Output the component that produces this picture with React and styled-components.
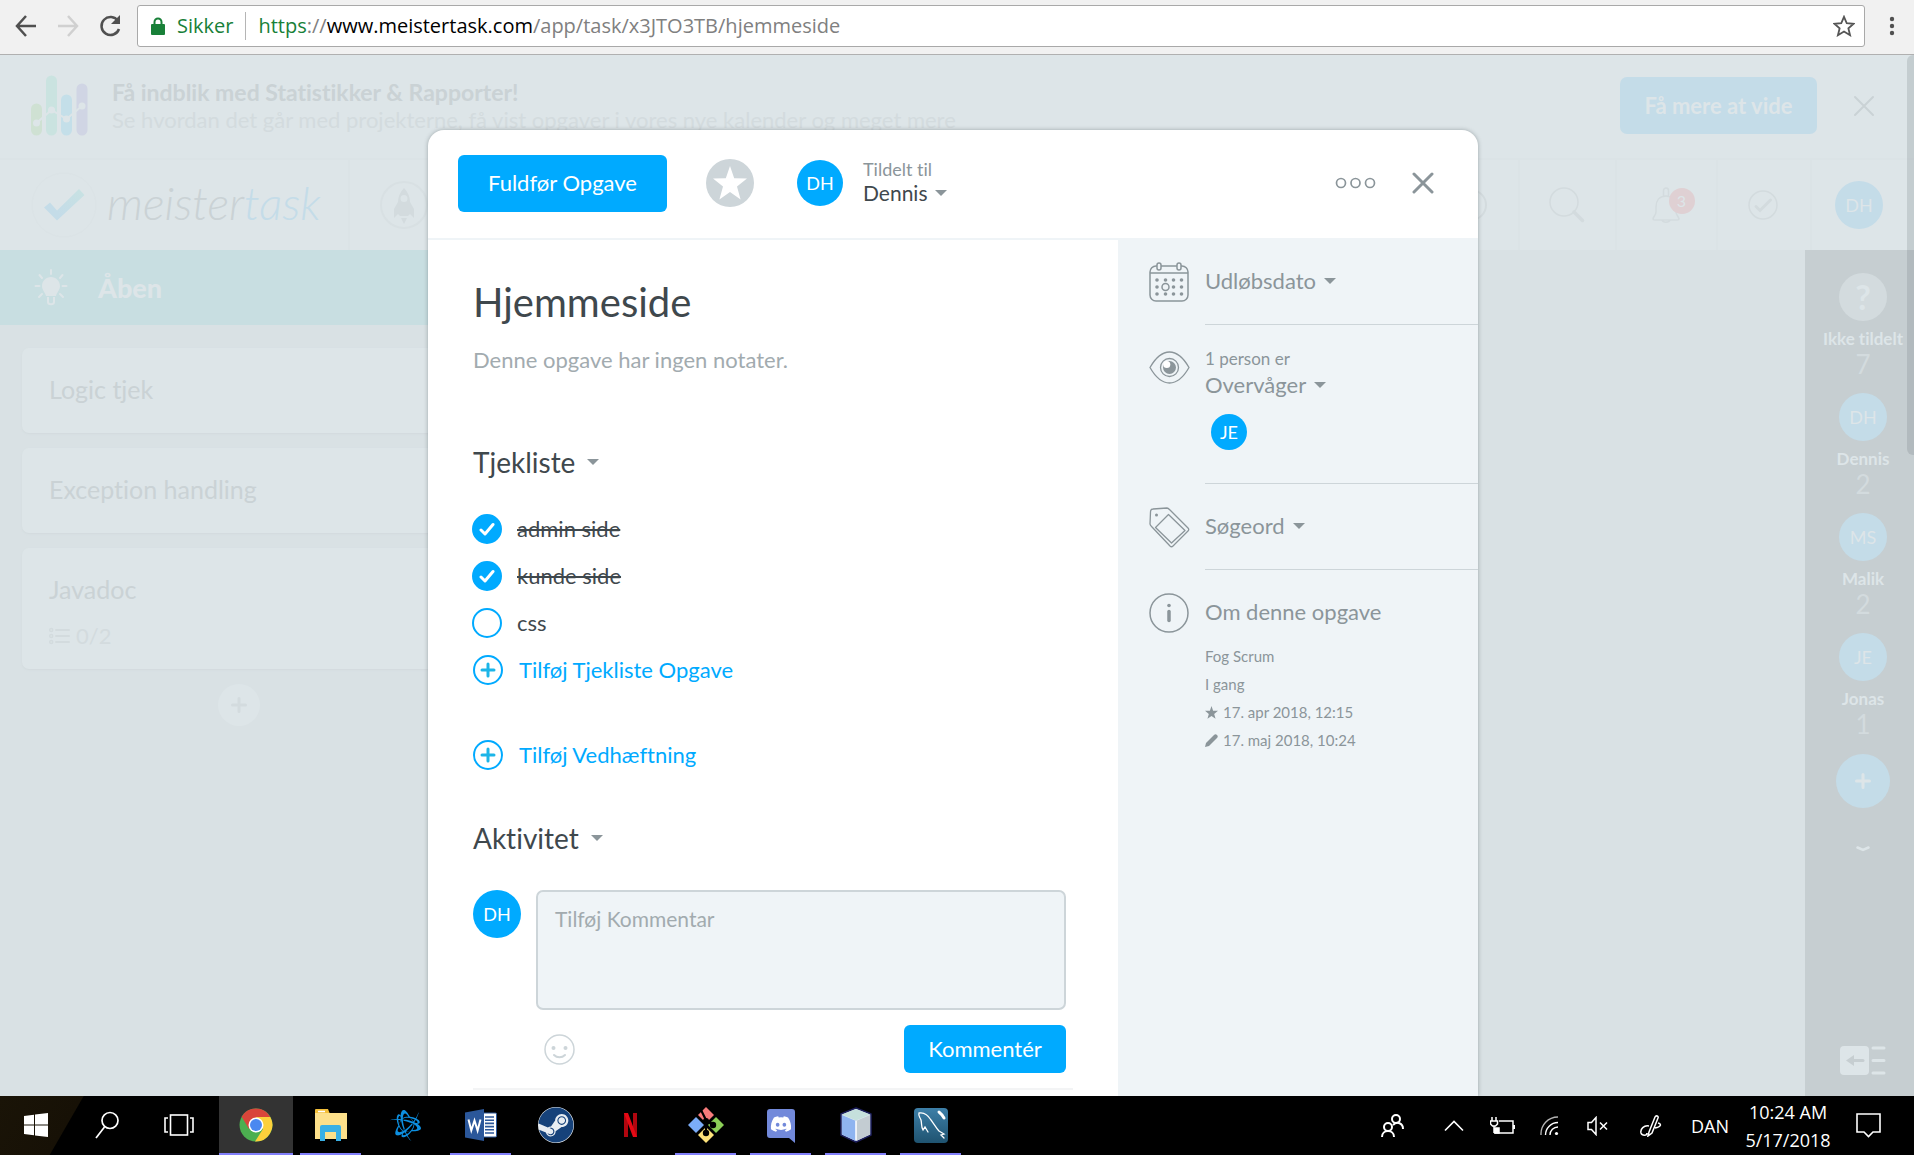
import React from 'react';
import styled, { createGlobalStyle, css } from 'styled-components';
import { FaBattleNet, FaDiscord, FaSteam } from 'react-icons/fa';

const color = {
  blue: '#00aaff',
  ink: '#3f484d',
  grey: '#8b959a',
  soft: '#a2abaf',
  line: '#cdd5d9',
  panel: '#eff4f7',
  veil: '#dde5e8',
  board: '#d9e1e4',
  fadedInk: '#cad2d5',
  faded: '#d3dbde',
  fadedLine: '#dbe3e6',
  fadedBlue: '#c4dce8',
};

const GlobalStyle = createGlobalStyle`
  *, *::before, *::after { box-sizing: border-box; }
  body {
    margin: 0;
    font-family: Lato, "Liberation Sans", sans-serif;
    font-variant-ligatures: none;
    color: ${color.ink};
  }
  button, input, textarea { font: inherit; font-variant-ligatures: none; color: inherit; }
  button { border: 0; padding: 0; background: none; cursor: pointer; }
  h1, h2, p, ul { margin: 0; padding: 0; font-weight: 400; }
  ul { list-style: none; }
  svg { display: block; flex: none; }
`;

const Shell = styled.div`
  display: flex;
  flex-direction: column;
  height: 100vh;
  overflow: hidden;
`;

/* Browser bar */

const BrowserBar = styled.header`
  display: flex;
  align-items: center;
  height: 55px;
  padding: 0 14px 3px 14px;
  background: #f1f1f1;
  border-bottom: 1px solid #b0b0b0;
  font-family: "Open Sans", "Noto Sans", sans-serif;
`;

const NavButtons = styled.div`
  display: flex;
  gap: 18px;
  width: 123px;
`;

const Address = styled.div`
  display: flex;
  flex: 1;
  align-items: center;
  height: 42px;
  padding: 0 9px 0 13px;
  background: #fff;
  border: 1px solid #a9a9a9;
  border-radius: 3px;
  font-size: 20px;
  line-height: 28px;
  color: #808080;
  white-space: nowrap;
`;

const Secure = styled.span`
  margin: 0 12px;
  color: #188038;
`;

const Url = styled.span`
  flex: 1;
  padding-left: 12px;
  border-left: 1px solid #b5b5b5;
  em { font-style: normal; color: #188038; }
  b { font-weight: 400; color: #000; }
`;

/* Application behind the dialog */

const Stage = styled.main`
  position: relative;
  flex: 1;
  min-height: 0;
  overflow: hidden;
`;

const Backdrop = styled.div`
  display: flex;
  flex-direction: column;
  height: 100%;
  background: ${color.board};
`;

const Banner = styled.section`
  display: flex;
  align-items: center;
  height: 105px;
  padding: 0 39px 2px 31px;
  background: ${color.veil};
  border-bottom: 2px solid ${color.fadedLine};
`;

const BannerText = styled.div`
  flex: 1;
  margin-left: 24px;
  font-size: 22px;
  line-height: 28px;
  color: ${color.faded};
  strong { display: block; font-size: 23px; color: ${color.fadedInk}; }
`;

const BannerButton = styled.button`
  height: 57px;
  width: 197px;
  margin-right: 36px;
  border-radius: 7px;
  background: ${color.fadedBlue};
  color: ${color.veil};
  font-size: 22px;
  font-weight: 700;
`;

const AppBar = styled.nav`
  display: flex;
  height: 90px;
  background: ${color.veil};
`;

const Brand = styled.a`
  display: flex;
  align-items: center;
  gap: 10px;
  width: 350px;
  padding-left: 31px;
  border-right: 2px solid ${color.fadedLine};
  color: ${color.fadedInk};
  text-decoration: none;
`;

const BrandName = styled.div`
  padding-bottom: 4px;
  font-size: 46px;
  font-style: italic;
  font-weight: 300;
  line-height: 60px;
  span { color: ${color.fadedBlue}; }
`;

const AppBarSpace = styled.div`
  display: flex;
  flex: 1;
  align-items: center;
  justify-content: space-between;
  padding: 0 30px;
`;

const AppBarCell = styled.div`
  display: flex;
  align-items: center;
  justify-content: center;
  width: ${(p) => p.$width}px;
  padding-right: ${(p) => p.$inset || 0}px;
  border-left: 2px solid ${color.fadedLine};
`;

const BellWrap = styled.button`
  position: relative;
`;

const Badge = styled.span`
  position: absolute;
  top: 1px;
  left: 17px;
  width: 26px;
  height: 26px;
  border-radius: 50%;
  background: #dfd0d3;
  color: ${color.veil};
  font-size: 16px;
  line-height: 26px;
  text-align: center;
`;

const Board = styled.div`
  display: flex;
  flex: 1;
  min-height: 0;
`;

const Column = styled.section`
  width: 478px;
`;

const ColumnHead = styled.header`
  display: flex;
  align-items: center;
  gap: 30px;
  height: 75px;
  padding-left: 34px;
  background: #c8dee1;
  color: ${color.veil};
  h2 { font-size: 27px; font-weight: 900; line-height: 32px; }
`;

const Cards = styled.div`
  display: flex;
  flex-direction: column;
  gap: 15px;
  padding: 23px 22px 15px;
`;

const Card = styled.article`
  min-height: 85px;
  padding: 25px 27px 19px;
  border-radius: 7px;
  background: ${color.veil};
  box-shadow: 0 1px 2px #d2dadd;
  color: ${color.fadedInk};
  font-size: 25px;
  line-height: 32px;
`;

const CardMeta = styled.p`
  display: flex;
  align-items: center;
  gap: 6px;
  margin-top: 17px;
  color: ${color.faded};
  font-size: 22px;
  line-height: 28px;
`;

const AddCard = styled.button`
  display: grid;
  place-items: center;
  width: 42px;
  height: 42px;
  margin: 0 auto;
  border-radius: 50%;
  background: ${color.veil};
`;

const People = styled.aside`
  display: flex;
  flex-direction: column;
  align-items: center;
  width: 109px;
  margin-left: auto;
  padding: 23px 0 21px 7px;
  background: #c6ced1;
`;

const Person = styled.div`
  display: flex;
  flex-direction: column;
  align-items: center;
  height: 120px;
  color: ${color.veil};
`;

const PersonName = styled.strong`
  margin-top: 4px;
  font-size: 17px;
  line-height: 28px;
  white-space: nowrap;
`;

const PersonCount = styled.span`
  color: ${color.faded};
  font-size: 26px;
  line-height: 22px;
`;

const AddPerson = styled.button`
  display: grid;
  place-items: center;
  width: 54px;
  height: 54px;
  margin: 1px 0 38px;
  border-radius: 50%;
  background: ${color.fadedBlue};
`;

const CollapsePeople = styled.button`
  margin-top: auto;
`;

const ScrollThumb = styled.div`
  position: absolute;
  top: 0;
  right: 0;
  width: 7px;
  height: 400px;
  border-radius: 6px 0 0 6px;
  background: rgba(100, 110, 115, 0.2);
`;

/* Shared pieces */

const Avatar = styled.span`
  display: grid;
  flex: none;
  place-items: center;
  width: ${(p) => p.$size}px;
  height: ${(p) => p.$size}px;
  border-radius: 50%;
  background: ${(p) => p.$bg || color.blue};
  color: ${(p) => p.$fg || '#fff'};
  font-size: ${(p) => p.$text || 18}px;
  line-height: 24px;
`;

const PrimaryButton = styled.button`
  width: ${(p) => p.$width}px;
  height: ${(p) => p.$height}px;
  border-radius: 6px;
  background: ${color.blue};
  color: #fff;
  font-size: 22px;
  line-height: 28px;
`;

const Caret = styled.span`
  flex: none;
  border: 6px solid transparent;
  border-top-color: ${color.grey};
  border-bottom: 0;
`;

const Drop = styled.button`
  display: flex;
  align-items: center;
  gap: 8px;
  color: ${(p) => (p.$dark ? color.ink : color.grey)};
  font-size: ${(p) => (p.$dark ? 21 : 22)}px;
  line-height: 28px;
`;

/* Task dialog */

const DialogLayer = styled.div`
  position: absolute;
  inset: 75px 8px 0 0;
  display: flex;
  justify-content: center;
`;

const Dialog = styled.section`
  display: flex;
  flex-direction: column;
  width: 1050px;
  border-radius: 16px 16px 0 0;
  background: #fff;
  box-shadow: 0 0 4px rgba(60, 70, 75, 0.4);
  overflow: hidden;
`;

const DialogHead = styled.header`
  display: flex;
  align-items: center;
  height: 110px;
  padding: 0 44px 2px 30px;
  border-bottom: 2px solid ${color.panel};
`;

const StarButton = styled.button`
  display: grid;
  place-items: center;
  width: 48px;
  height: 48px;
  margin: 0 43px 0 39px;
  border-radius: 50%;
  background: ${color.line};
`;

const Assignee = styled.div`
  flex: 1;
  margin-left: 20px;
  color: ${color.grey};
  font-size: 18px;
  line-height: 20px;
`;

const HeadActions = styled.div`
  display: flex;
  align-items: center;
  gap: 36px;
`;

const DialogBody = styled.div`
  display: flex;
  flex: 1;
  min-height: 0;
`;

const Main = styled.div`
  flex: 1;
  padding: 38px 45px 0;
`;

const Title = styled.h1`
  font-size: 40px;
  line-height: 48px;
`;

const Notes = styled.p`
  margin-top: 20px;
  color: ${color.soft};
  font-size: 22px;
  line-height: 28px;
`;

const SectionTitle = styled.h2`
  display: flex;
  align-items: center;
  gap: 12px;
  margin-bottom: 35px;
  font-size: 28px;
  line-height: 34px;
`;

const Checklist = styled.ul`
  display: flex;
  flex-direction: column;
  gap: 17px;
  margin: 0 0 17px -1px;
`;

const CheckRow = styled.label`
  display: grid;
  grid-template-columns: 30px 1fr;
  column-gap: 15px;
  align-items: center;
  font-size: 22px;
  line-height: 28px;
  svg { grid-area: 1 / 1; justify-self: center; pointer-events: none; }
  span { grid-area: 1 / 2; justify-self: start; }
  ${(p) => p.$done && css`span { text-decoration: line-through 2px; }`}
`;

const CheckInput = styled.input`
  grid-area: 1 / 1;
  appearance: none;
  width: 30px;
  height: 30px;
  margin: 0;
  border: 2px solid ${color.blue};
  border-radius: 50%;
  &:checked { background: ${color.blue}; }
`;

const AddLink = styled.button`
  display: flex;
  align-items: center;
  gap: 16px;
  color: ${color.blue};
  font-size: 22px;
  line-height: 28px;
`;

const Block = styled.section`
  margin-top: ${(p) => p.$top}px;
`;

const Composer = styled.form`
  display: grid;
  grid-template-columns: 48px 1fr;
  column-gap: 15px;
  row-gap: 15px;
  padding: 0 7px 15px 0;
  border-bottom: 2px solid #f3f4f5;
`;

const CommentBox = styled.textarea`
  display: block;
  width: 100%;
  height: 120px;
  padding: 13px 17px;
  border: 2px solid ${color.line};
  border-radius: 7px;
  background: ${color.panel};
  font-size: 21px;
  line-height: 28px;
  resize: none;
  &::placeholder { color: ${color.soft}; opacity: 1; }
`;

const ComposerFoot = styled.div`
  display: flex;
  grid-column: 2;
  align-items: center;
  justify-content: space-between;
  padding-left: 8px;
`;

const Side = styled.aside`
  width: 360px;
  margin-top: -2px;
  padding-left: 31px;
  background: ${color.panel};
`;

const SideItem = styled.section`
  display: flex;
  gap: 15px;
  align-items: flex-start;
`;

const SideIcon = styled.div`
  width: 41px;
  padding-top: ${(p) => p.$top}px;
`;

const SideBody = styled.div`
  flex: 1;
  padding: ${(p) => p.$pad};
  border-bottom: ${(p) => (p.$last ? '0' : '1px')} solid ${color.line};
  color: ${color.grey};
  font-size: 22px;
  line-height: 28px;
`;

const SideSmall = styled.p`
  font-size: 17px;
  line-height: 24px;
`;

const Watchers = styled.div`
  padding: 15px 0 0 6px;
`;

const Facts = styled.ul`
  margin-top: 16px;
  font-size: 15px;
  line-height: 28px;
  li { display: flex; align-items: center; gap: 5px; }
`;

/* Taskbar */

const Taskbar = styled.footer`
  display: flex;
  height: 59px;
  background: linear-gradient(120deg, #1a1407 0, #171106 72px, #000 73px);
  color: #fff;
  font-family: "Open Sans", "Noto Sans", sans-serif;
`;

const TaskButton = styled.button`
  display: grid;
  place-items: center;
  width: ${(p) => p.$width || 75}px;
  padding-bottom: 1px;
  background: ${(p) => (p.$active ? '#333' : 'none')};
  ${(p) => p.$open && css`
    background: linear-gradient(#8280fa, #8280fa) bottom / ${p.$active ? '100%' : '61px'} 2px no-repeat ${p.$active ? '#333' : 'transparent'};
  `}
`;

const SystemButtons = styled.div`
  display: flex;
  width: 219px;
`;

const Tray = styled.div`
  display: flex;
  align-items: center;
  gap: 27px;
  margin-left: auto;
  padding-right: 33px;
  font-size: 18px;
`;

const TrayIcons = styled.div`
  display: grid;
  grid-template-columns: 38px 71px 50px 47px 53px 24px;
  align-items: center;
`;

const Clock = styled.time`
  width: 92px;
  line-height: 28px;
  text-align: center;
  margin: 0 -5px 0 -14px;
`;

const Cross = ({ size, stroke, width = 3 }) => (
  <svg width={size} height={size} viewBox="0 0 22 22" stroke={stroke} strokeWidth={width} strokeLinecap="round">
    <path d="M2 2 20 20M20 2 2 20" />
  </svg>
);

const Plus = ({ size, stroke, width }) => (
  <svg width={size} height={size} viewBox="0 0 16 16" stroke={stroke} strokeWidth={width} strokeLinecap="round">
    <path d="M8 1.5v13M1.5 8h13" />
  </svg>
);

const AddCircle = () => (
  <svg width="30" height="30" viewBox="0 0 30 30" fill="none" strokeLinecap="round">
    <circle cx="15" cy="15" r="14" stroke={color.blue} strokeWidth="2" />
    <path d="M15 9v12M9 15h12" stroke="#1cb5e8" strokeWidth="3" />
  </svg>
);

const Star = ({ size, fill }) => (
  <svg width={size} height={size} viewBox="0 0 34 34" fill={fill}>
    <path d="M17 0 21.2 12.2 34 12.6 24 20.6 27.6 33.4 17 26 6.4 33.4 10 20.6 0 12.6 12.8 12.2Z" />
  </svg>
);

const StatsIcon = () => (
  <svg width="57" height="61" viewBox="0 0 57 61" strokeLinecap="round" fill="none" strokeWidth="11">
    <path d="M5.5 34v21" stroke="#cfe1d3" />
    <path d="M20.500 6v49" stroke="#cae3e0" />
    <path d="M35.500 25v30" stroke="#c4dfe9" />
    <path d="M51 14v41" stroke="#d0d5e4" />
    <path d="M5.500 48 20.500 35 35.500 44 51 31" stroke={color.veil} strokeWidth="2" />
    <g fill={color.veil}>
      <circle cx="5.500" cy="48" r="3.500" /><circle cx="20.500" cy="35" r="3.500" />
      <circle cx="35.500" cy="44" r="3.500" /><circle cx="51" cy="31" r="3.500" />
    </g>
  </svg>
);

const BrandMark = () => (
  <svg width="66" height="66" viewBox="0 0 66 66" fill="none">
    <defs>
      <linearGradient id="tick" x1="0" y1="1" x2="1" y2="0">
        <stop offset=".3" stopColor="#c4dce8" /><stop offset="1" stopColor="#c8e2e2" />
      </linearGradient>
    </defs>
    <circle cx="33" cy="33" r="32" stroke={color.fadedLine} />
    <path d="M13 35.500 19 30.500 26 38.500 48 17 53.500 23 26 48.500Z" fill="url(#tick)" />
  </svg>
);

const Rocket = () => (
  <svg width="48" height="48" viewBox="0 0 48 48">
    <circle cx="24" cy="24" r="23" fill="none" stroke="#d8e0e3" strokeWidth="2" />
    <path fill={color.faded} fillRule="evenodd" d="M24 7c4 4 6 9 6 14l4 7v9l-4-4-2 2h-8l-2-2-4 4v-9l4-7c0-5 2-10 6-14Zm0 7a3.500 3.500 0 1 0 0 7 3.500 3.500 0 0 0 0-7ZM21 37h6l-3 6Z" />
  </svg>
);

const Ring = () => (
  <svg width="34" height="34" viewBox="0 0 34 34" fill="none" stroke={color.faded} strokeWidth="2">
    <circle cx="17" cy="17" r="15" /><path d="M17 9v8l5 4" />
  </svg>
);

const SearchIcon = () => (
  <svg width="36" height="36" viewBox="0 0 36 36" fill="none" stroke={color.faded} strokeLinecap="round">
    <circle cx="15" cy="15" r="14" strokeWidth="1.500" />
    <path d="M25 25 33.500 33.500" strokeWidth="3.500" />
  </svg>
);

const Bell = () => (
  <svg width="28" height="36" viewBox="0 0 28 36" fill="none" stroke={color.faded} strokeWidth="1.500">
    <path d="M11.500 9V3.500a2.500 2.500 0 0 1 5 0V9M14 9c-7 0-10 5-10 11v5c0 3-3 5-3 7 0 1 1 1 2 1h22c1 0 2 0 2-1 0-2-3-4-3-7v-5c0-6-3-11-10-11ZM10 33c1 3 7 3 8 0" />
  </svg>
);

const CheckRing = () => (
  <svg width="30" height="30" viewBox="0 0 30 30" fill="none" stroke={color.faded}>
    <circle cx="15" cy="15" r="14" strokeWidth="1.500" />
    <path d="M8 16.500 12 20.500 22.500 10" strokeWidth="3" strokeLinecap="round" />
  </svg>
);

const Bulb = () => (
  <svg width="34" height="38" viewBox="0 0 34 38" fill={color.veil} stroke={color.veil}>
    <path d="M17 8c5 0 9 4 9 9 0 4-3 6-4 10H12c-1-4-4-6-4-10 0-5 4-9 9-9Z" stroke="none" />
    <path d="M14 28v5c0 3 6 3 6 0v-5" fill="none" strokeWidth="2" />
    <path d="M17 1v4M5.500 6 8 9M28.500 6 26 9M1.500 17h4M28.500 17h4M5 28l3-3M29 28l-3-3" strokeWidth="2" strokeLinecap="round" />
  </svg>
);

const ListIcon = () => (
  <svg width="21" height="18" viewBox="0 0 21 18" fill="none" stroke={color.faded} strokeLinecap="round">
    <g strokeWidth="1.500"><circle cx="2.200" cy="3" r="1.500" /><circle cx="2.200" cy="9" r="1.500" /><circle cx="2.200" cy="15" r="1.500" /></g>
    <path d="M7 3h13M7 9h13M7 15h13" strokeWidth="2" />
  </svg>
);

const Calendar = () => (
  <svg width="41" height="40" viewBox="0 0 41 40" fill="none" stroke={color.grey} strokeWidth="1.500">
    <path d="M8 4H7a6 6 0 0 0-6 6v23a6 6 0 0 0 6 6h26a6 6 0 0 0 6-6V10a6 6 0 0 0-6-6h-1M12 4h16M1 11h38" />
    <rect x="8" y="1" width="4" height="7" rx="2" /><rect x="28" y="1" width="4" height="7" rx="2" />
    <circle cx="16.500" cy="25" r="3.500" />
    <g fill={color.grey} stroke="none">
      {[8, 16.5, 24.5, 32.5].map((x) => [18, 25, 32].map((y) => (x === 16.5 && y === 25 ? null : <circle key={`${x}-${y}`} cx={x} cy={y} r="1.800" />)))}
    </g>
  </svg>
);

const Eye = () => (
  <svg width="41" height="33" viewBox="0 0 41 33" fill="none" stroke={color.grey} strokeWidth="1.300">
    <path d="M1 16.500C7 6 13 1 20.500 1S34 6 40 16.500C34 27 28 32 20.500 32S7 27 1 16.500Z" />
    <circle cx="20.500" cy="16.500" r="9" />
    <circle cx="20.500" cy="16.500" r="6.500" fill={color.grey} stroke="none" />
    <circle cx="17.800" cy="13.500" r="3.500" fill="#fff" stroke="none" />
  </svg>
);

const Tag = () => (
  <svg width="41" height="41" viewBox="0 0 41 41" fill="none" stroke={color.grey} strokeWidth="1.300" strokeLinejoin="round">
    <path d="M4 2 18 1c1 0 2 1 3 2l18 18c1 1 1 2 0 3L24 39c-1 1-2 1-3 0L3 20c-1-1-2-2-2-3l.500-12c0-2 1-3 2.500-3Z" />
    <path d="M19.500 7.500 36 23.500 22.500 36 6.500 20.500Z" />
    <circle cx="7.500" cy="8" r="1.500" fill={color.grey} stroke="none" />
  </svg>
);

const Info = () => (
  <svg width="41" height="40" viewBox="0 0 41 40" fill="none" stroke={color.grey}>
    <circle cx="20" cy="20" r="19" strokeWidth="1.500" />
    <path d="M20 18.500v9" strokeWidth="3.500" strokeLinecap="round" />
    <circle cx="20" cy="12.500" r="1.800" fill={color.grey} stroke="none" />
  </svg>
);

const Pencil = () => (
  <svg width="13" height="13" viewBox="0 0 13 13" fill={color.grey}>
    <path d="M0 13 1 9 9 1c1-1 2-1 3 0s1 2 0 3L4 12Z" />
  </svg>
);

const Smiley = () => (
  <svg width="31" height="31" viewBox="0 0 31 31" fill="none" stroke={color.line} strokeWidth="1.500">
    <circle cx="15.500" cy="15.500" r="14.500" />
    <path d="M10 21c3 3 8 3 11 0" strokeWidth="2" strokeLinecap="round" />
    <g fill={color.line} stroke="none"><circle cx="9.500" cy="14" r="2" /><circle cx="21.500" cy="14" r="2" /></g>
  </svg>
);

const ChromeLogo = () => (
  <svg width="34" height="34" viewBox="0 0 34 34">
    <circle cx="17" cy="17" r="16.500" fill="#4caf50" />
    <path d="M17 17 2.700 8.700A16.500 16.500 0 0 1 31.300 9H17Z" fill="#d9453a" />
    <path d="M17 9h14.300A16.500 16.500 0 0 1 16 33.500L24 21Z" fill="#fcd03b" />
    <path d="M2.700 8.700 10 21l7-12-7-3Z" fill="#d9453a" />
    <circle cx="17" cy="17" r="7.500" fill="#fff" /><circle cx="17" cy="17" r="6" fill="#4a88f0" />
  </svg>
);

const Folder = () => (
  <svg width="32" height="32" viewBox="0 0 32 32">
    <path d="M0 1a1 1 0 0 1 1-1h12l2 5H0Z" fill="#f3bf3a" /><path d="M0 4h32v26H0Z" fill="#fde08a" />
    <path d="M3 2.500h7" stroke="#fff" strokeWidth="1.500" />
    <path d="M5 32V18a2 2 0 0 1 2-2h17a2 2 0 0 1 2 2v14h-5v-9H10v9Z" fill="#39b0e5" />
  </svg>
);

const WordLogo = () => (
  <svg width="32" height="32" viewBox="0 0 32 32">
    <rect x="15" y="4" width="16.500" height="24" rx="1" fill="#fff" stroke="#2b579a" />
    <path d="M20 8h9M20 11.200h9M20 14.400h9M20 17.600h9M20 20.800h9M20 24h9" stroke="#2b579a" strokeWidth="1.600" />
    <path d="M0 3.500 19 0v32L0 28.500Z" fill="#2b579a" />
    <path d="M3.500 10.500 6.300 21.500 9.500 11.500 12.600 21.500 15.500 10.500" fill="none" stroke="#fff" strokeWidth="2" />
  </svg>
);

const GitLogo = () => (
  <svg width="36" height="36" viewBox="0 0 36 36">
    <path d="M18 0 26 8 18 16 10 8Z" fill="#f77b7b" /><path d="M28 10 36 18 28 26 20 18Z" fill="#8ccf57" />
    <path d="M18 20 26 28 18 36 10 28Z" fill="#fde27a" /><path d="M8 10 16 18 8 26 0 18Z" fill="#7bacf8" />
    <path d="M13 3 18 13v13M18 13l7 5" fill="none" stroke="#000" strokeWidth="2.200" />
    <circle cx="18" cy="14" r="3" /><circle cx="18" cy="26" r="3.200" /><circle cx="25" cy="18" r="3.200" />
  </svg>
);

const DiscordLogo = () => (
  <svg width="28" height="36" viewBox="0 0 28 36">
    <path d="M3 2h22a3 3 0 0 1 3 3v31l-6-5H3a3 3 0 0 1-3-3V5a3 3 0 0 1 3-3Z" fill="#7289da" />
    <FaDiscord x="3" y="6" size={22} color="#fff" />
  </svg>
);

const SteamTile = styled.span`
  display: block;
  width: 36px;
  height: 36px;
  border-radius: 50%;
  background: #e8edf2;
  svg { width: 36px; height: 36px; }
`;

const NetBeans = () => (
  <svg width="34" height="36" viewBox="0 0 34 36" stroke="#1d1f5c" strokeWidth="1.500" strokeLinejoin="round">
    <path d="M17 1 32 7v21L17 35 2 28V7Z" fill="#dfe9f2" />
    <path d="M3 8 17 14v20L3 27.500Z" fill="#8fb4f0" stroke="none" />
    <path d="M31 8 17 14v20l14-6.500Z" fill="#c3ccd2" stroke="none" />
    <path d="M17 2 31 7.500 17 13.500 3 7.500Z" fill="#c5e0dc" stroke="none" />
    <path d="M17 14v19" stroke="#fff" />
  </svg>
);

const Workbench = () => (
  <svg width="34" height="35" viewBox="0 0 34 35" fill="none" stroke="#fff" strokeWidth="1.300" strokeLinecap="round">
    <defs><linearGradient id="wb" x1="0" y1="0" x2="0" y2="1"><stop stopColor="#3d7fa8" /><stop offset="1" stopColor="#1f5370" /></linearGradient></defs>
    <rect width="34" height="35" rx="4" fill="url(#wb)" stroke="none" />
    <path d="M5 5c5-1 9 2 12 7 3 4 5 8 8 11l5 3-3 1 3 3M5 5c-1 3 1 4 2 7 1 4 0 7 2 10l2-3 3 5" />
    <path d="M25 4l3 3 2 3" strokeWidth="3" />
  </svg>
);

const BACKLOG = [{ title: 'Logic tjek' }, { title: 'Exception handling' }, { title: 'Javadoc', progress: '0/2' }];
const PEOPLE = [
  { initials: '?', name: 'Ikke tildelt', count: 7 },
  { initials: 'DH', name: 'Dennis', count: 2 },
  { initials: 'MS', name: 'Malik', count: 2 },
  { initials: 'JE', name: 'Jonas', count: 1 },
];
const TODOS = [{ text: 'admin side', done: true }, { text: 'kunde side', done: true }, { text: 'css', done: false }];

function Browser() {
  return (
    <BrowserBar>
      <NavButtons>
        <button aria-label="Tilbage">
          <svg width="24" height="24" viewBox="0 0 24 24" fill="none" stroke="#505050" strokeWidth="2.500"><path d="M22 12H3M12 2 3 12l9 10" /></svg>
        </button>
        <button aria-label="Frem">
          <svg width="24" height="24" viewBox="0 0 24 24" fill="none" stroke="#d0d0d0" strokeWidth="2.500"><path d="M2 12h19M12 2l9 10-9 10" /></svg>
        </button>
        <button aria-label="Genindlæs">
          <svg width="24" height="24" viewBox="0 0 24 24" fill="none" stroke="#505050" strokeWidth="2.500"><path d="M20 7a9 9 0 1 0 1 8" /><path d="M22 1v9h-9Z" fill="#505050" stroke="none" /></svg>
        </button>
      </NavButtons>
      <Address>
        <svg width="14" height="18" viewBox="0 0 14 18"><rect x="0" y="7" width="14" height="11" rx="1" fill="#188038" /><path d="M3.500 8V5a3.500 3.500 0 0 1 7 0v3" fill="none" stroke="#188038" strokeWidth="2" /></svg>
        <Secure>Sikker</Secure>
        <Url><em>https</em>://<b>www.meistertask.com</b>/app/task/x3JTO3TB/hjemmeside</Url>
        <button aria-label="Bogmærk">
          <svg width="22" height="22" viewBox="0 0 24 24" fill="none" stroke="#555" strokeWidth="2"><path d="m12 2 3 7 7.500.600-5.700 5 1.800 7.400L12 18l-6.600 4 1.800-7.400-5.700-5L9 9Z" /></svg>
        </button>
      </Address>
      <svg width="35" height="20" viewBox="0 0 35 20" fill="#505050"><circle cx="27" cy="3" r="2.200" /><circle cx="27" cy="10" r="2.200" /><circle cx="27" cy="17" r="2.200" /></svg>
    </BrowserBar>
  );
}

function BoardPage() {
  return (
    <Backdrop>
      <Banner>
        <StatsIcon />
        <BannerText>
          <strong>Få indblik med Statistikker &amp; Rapporter!</strong>
          Se hvordan det går med projekterne, få vist opgaver i vores nye kalender og meget mere
        </BannerText>
        <BannerButton>Få mere at vide</BannerButton>
        <button aria-label="Luk banner"><Cross size={22} stroke={color.fadedInk} width={2} /></button>
      </Banner>
      <AppBar>
        <Brand href="#"><BrandMark /><BrandName>meister<span>task</span></BrandName></Brand>
        <AppBarSpace><Rocket /><Ring /></AppBarSpace>
        <AppBarCell $width={97} $inset={2}><button aria-label="Søg"><SearchIcon /></button></AppBarCell>
        <AppBarCell $width={101} $inset={2}><BellWrap aria-label="Notifikationer"><Bell /><Badge>3</Badge></BellWrap></AppBarCell>
        <AppBarCell $width={94} $inset={2}><button aria-label="Mine opgaver"><CheckRing /></button></AppBarCell>
        <AppBarCell $width={104} $inset={8}><Avatar $size={48} $bg={color.fadedBlue} $fg={color.veil}>DH</Avatar></AppBarCell>
      </AppBar>
      <Board>
        <Column>
          <ColumnHead><Bulb /><h2>Åben</h2></ColumnHead>
          <Cards>
            {BACKLOG.map((card) => (
              <Card key={card.title}>
                {card.title}
                {card.progress && <CardMeta><ListIcon />{card.progress}</CardMeta>}
              </Card>
            ))}
          </Cards>
          <AddCard aria-label="Tilføj opgave"><Plus size={16} stroke={color.faded} width={3} /></AddCard>
        </Column>
        <People>
          {PEOPLE.map((p) => (
            <Person key={p.name}>
              <Avatar $size={48} $bg={p.initials === '?' ? color.faded : color.fadedBlue} $fg={color.veil} $text={p.initials === '?' ? 34 : 18}>
                {p.initials === '?' ? <strong>?</strong> : p.initials}
              </Avatar>
              <PersonName>{p.name}</PersonName>
              <PersonCount>{p.count}</PersonCount>
            </Person>
          ))}
          <AddPerson aria-label="Tilføj medlem"><Plus size={16} stroke={color.veil} width={3} /></AddPerson>
          <button aria-label="Vis flere">
            <svg width="14" height="6" viewBox="0 0 14 6" fill="none" stroke={color.veil} strokeWidth="2.500" strokeLinecap="round"><path d="M1.500 1.500 7 4l5.500-2.500" /></svg>
          </button>
          <CollapsePeople aria-label="Skjul panel">
            <svg width="46" height="29" viewBox="0 0 46 29" strokeLinecap="round">
              <rect width="29" height="29" rx="4" fill={color.veil} />
              <path d="M33 2h11M33 14.500h11M33 27h11" stroke={color.veil} strokeWidth="3" />
              <path d="M11 14.500h12" stroke="#c6ced1" strokeWidth="3" /><path d="M6 14.500 14 9v11Z" fill="#c6ced1" />
            </svg>
          </CollapsePeople>
        </People>
      </Board>
      <ScrollThumb />
    </Backdrop>
  );
}

function TaskDialog() {
  return (
    <DialogLayer>
      <Dialog role="dialog" aria-label="Hjemmeside">
        <DialogHead>
          <PrimaryButton $width={209} $height={57}>Fuldfør Opgave</PrimaryButton>
          <StarButton aria-label="Favorit"><Star size={34} fill="#fff" /></StarButton>
          <Avatar $size={46}>DH</Avatar>
          <Assignee>Tildelt til<Drop $dark>Dennis<Caret /></Drop></Assignee>
          <HeadActions>
            <button aria-label="Mere">
              <svg width="41" height="12" viewBox="0 0 41 12" fill="none" stroke={color.grey} strokeWidth="1.700"><circle cx="6" cy="6" r="4.500" /><circle cx="20.500" cy="6" r="4.500" /><circle cx="35" cy="6" r="4.500" /></svg>
            </button>
            <button aria-label="Luk"><Cross size={22} stroke={color.grey} /></button>
          </HeadActions>
        </DialogHead>
        <DialogBody>
          <Main>
            <Title>Hjemmeside</Title>
            <Notes>Denne opgave har ingen notater.</Notes>
            <Block $top={71}>
              <SectionTitle>Tjekliste<Caret /></SectionTitle>
              <Checklist>
                {TODOS.map((todo) => (
                  <li key={todo.text}>
                    <CheckRow $done={todo.done}>
                      <CheckInput type="checkbox" defaultChecked={todo.done} />
                      {todo.done && (
                        <svg width="16" height="14" viewBox="0 0 16 14" fill="none" stroke="#fff" strokeWidth="3" strokeLinecap="round" strokeLinejoin="round"><path d="M2 8l4 4 8-9.500" /></svg>
                      )}
                      <span>{todo.text}</span>
                    </CheckRow>
                  </li>
                ))}
              </Checklist>
              <AddLink><AddCircle />Tilføj Tjekliste Opgave</AddLink>
            </Block>
            <Block $top={55}>
              <AddLink><AddCircle />Tilføj Vedhæftning</AddLink>
            </Block>
            <Block $top={51}>
              <SectionTitle>Aktivitet<Caret /></SectionTitle>
              <Composer>
                <Avatar $size={48}>DH</Avatar>
                <CommentBox aria-label="Kommentar" placeholder="Tilføj Kommentar" />
                <ComposerFoot>
                  <button type="button" aria-label="Emoji"><Smiley /></button>
                  <PrimaryButton type="button" $width={162} $height={48}>Kommentér</PrimaryButton>
                </ComposerFoot>
              </Composer>
            </Block>
          </Main>
          <Side>
            <SideItem>
              <SideIcon $top={24}><Calendar /></SideIcon>
              <SideBody $pad="29px 0"><Drop>Udløbsdato<Caret /></Drop></SideBody>
            </SideItem>
            <SideItem>
              <SideIcon $top={26}><Eye /></SideIcon>
              <SideBody $pad="22px 0 33px">
                <SideSmall>1 person er</SideSmall>
                <Drop>Overvåger<Caret /></Drop>
                <Watchers><Avatar $size={36}>JE</Avatar></Watchers>
              </SideBody>
            </SideItem>
            <SideItem>
              <SideIcon $top={23}><Tag /></SideIcon>
              <SideBody $pad="28px 0 29px"><Drop>Søgeord<Caret /></Drop></SideBody>
            </SideItem>
            <SideItem>
              <SideIcon $top={23}><Info /></SideIcon>
              <SideBody $pad="28px 0" $last>
                Om denne opgave
                <Facts>
                  <li>Fog Scrum</li>
                  <li>I gang</li>
                  <li><Star size={13} fill={color.grey} />17. apr 2018, 12:15</li>
                  <li><Pencil />17. maj 2018, 10:24</li>
                </Facts>
              </SideBody>
            </SideItem>
          </Side>
        </DialogBody>
      </Dialog>
    </DialogLayer>
  );
}

function WindowsBar() {
  return (
    <Taskbar>
      <SystemButtons>
        <TaskButton $width={71} aria-label="Start">
          <svg width="24" height="24" viewBox="0 0 24 24" fill="#fff"><path d="M0 3 10 1.700V11.500H0ZM11 1.500 24 0v11.500H11ZM0 12.500h10v9.800L0 21ZM11 12.500h13V24l-13-1.600Z" /></svg>
        </TaskButton>
        <TaskButton $width={72} aria-label="Søg">
          <svg width="24" height="30" viewBox="0 0 24 30" fill="none" stroke="#fff" strokeWidth="1.700"><circle cx="15" cy="10.500" r="8" /><path d="M9.500 17 1 28" /></svg>
        </TaskButton>
        <TaskButton $width={72} aria-label="Opgavevisning">
          <svg width="30" height="22" viewBox="0 0 30 22" fill="none" stroke="#fff" strokeWidth="1.600"><rect x="6.500" y="1" width="17" height="20" /><path d="M4 4H1v14h3M26 4h3v14h-3" /></svg>
        </TaskButton>
      </SystemButtons>
      <TaskButton $width={74} $open $active aria-label="Chrome"><ChromeLogo /></TaskButton>
      <TaskButton $open aria-label="Stifinder"><Folder /></TaskButton>
      <TaskButton aria-label="Battle.net"><FaBattleNet size={31} color="#0d8fe0" /></TaskButton>
      <TaskButton $open aria-label="Word"><WordLogo /></TaskButton>
      <TaskButton aria-label="Steam"><SteamTile><FaSteam color="#16427a" /></SteamTile></TaskButton>
      <TaskButton aria-label="Netflix">
        <svg width="13" height="24" viewBox="0 0 13 24"><path d="M0 0h4v24H0ZM9 0h4v24H9Z" fill="#b1060f" /><path d="M0 0h4l9 24H9Z" fill="#e50914" /></svg>
      </TaskButton>
      <TaskButton $open aria-label="Git"><GitLogo /></TaskButton>
      <TaskButton $open aria-label="Discord"><DiscordLogo /></TaskButton>
      <TaskButton $open aria-label="NetBeans"><NetBeans /></TaskButton>
      <TaskButton $open aria-label="MySQL Workbench"><Workbench /></TaskButton>
      <Tray>
        <TrayIcons>
          <svg width="23" height="24" viewBox="0 0 23 24" fill="none" stroke="#fff" strokeWidth="2"><circle cx="7" cy="13" r="4" /><path d="M1 23c0-8 12-8 12 0" /><circle cx="15" cy="5" r="4" /><path d="M12 11c4-4 10-2 10 4" /></svg>
          <svg width="62" height="12" viewBox="0 0 62 12" fill="none" stroke="#fff" strokeWidth="1.600"><path d="M26 10.500 35 1.500l9 9" /></svg>
          <svg width="25" height="18" viewBox="0 0 25 18" fill="none" stroke="#fff" strokeWidth="1.500"><path d="M9 4h14v12H5v-5M24.500 8v4M2 0v4M6 0v4M.500 4h7v3l-2 2h-3l-2-2ZM4 9v7" /><path d="M5 11h4v5H5Z" fill="#fff" /></svg>
          <svg width="19" height="20" viewBox="0 0 19 20" fill="none" stroke="#fff" strokeWidth="1.400"><path d="M1 19A17 17 0 0 1 18 1" opacity=".7" /><path d="M5.500 19A12.500 12.500 0 0 1 18 6.500M10 19a8 8 0 0 1 8-8" /><circle cx="16.500" cy="17.500" r="1.600" fill="#fff" stroke="none" /></svg>
          <svg width="21" height="20" viewBox="0 0 21 20" fill="none" stroke="#fff" strokeWidth="1.500"><path d="M1 6.500h3.500L9 1.500v17l-4.500-5H1ZM13 6.500l7 7M20 6.500l-7 7" /></svg>
          <svg width="22" height="22" viewBox="0 0 22 22" fill="none" stroke="#fff" strokeWidth="1.500"><path d="M9 17 15 2c1-2 4-1 3 1l-6 15-4 3ZM9 11c-5-1-9 3-8 7 1 3 6 3 6 0M18 8c4 1 3 4-3 5" /></svg>
        </TrayIcons>
        <span>DAN</span>
        <Clock>10:24 AM<br />5/17/2018</Clock>
        <svg width="25" height="25" viewBox="0 0 25 25" fill="none" stroke="#fff" strokeWidth="1.600"><path d="M1 1h23v18h-7l-4.500 4.500L8 19H1Z" /></svg>
      </Tray>
    </Taskbar>
  );
}

export default function App() {
  return (
    <Shell>
      <GlobalStyle />
      <Browser />
      <Stage>
        <BoardPage />
        <TaskDialog />
      </Stage>
      <WindowsBar />
    </Shell>
  );
}
